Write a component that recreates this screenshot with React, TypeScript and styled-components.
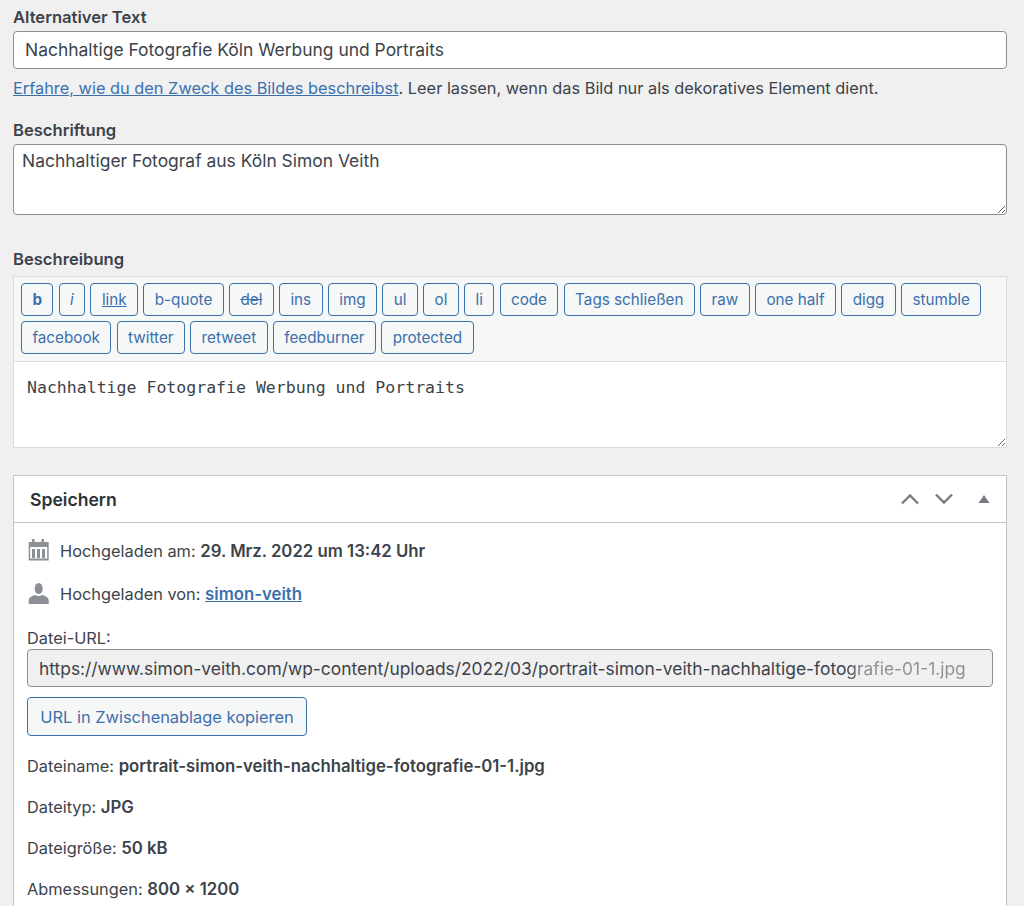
import React from "react";
import styled, { createGlobalStyle } from "styled-components";

const GlobalStyle = createGlobalStyle`
  html, body {
    margin: 0;
    height: 906px;
    overflow: hidden;
    background: #f0f0f1;
  }
  * { box-sizing: border-box; }
`;

const sans = `Inter, "Liberation Sans", sans-serif`;
const blue = "#3b70ad";
const text = "#3c434a";

const Page = styled.div`
  padding: 8px 17px 0 13px;
  font-family: ${sans};
  font-size: 16.35px;
  color: ${text};

  b {
    font-size: 16.75px;
    font-weight: 600;
  }
`;

const Field = styled.div<{ $bottom: number }>`
  display: flex;
  flex-direction: column;
  margin-bottom: ${(p) => p.$bottom}px;
`;

const Label = styled.label`
  font-weight: 600;
  font-size: 16.6px;
  line-height: 18px;
  margin-bottom: 5px;
`;

const TextInput = styled.input`
  height: 38px;
  padding: 0 11px 1px;
  border: 1px solid #8c8f94;
  border-radius: 4px;
  background: #fff;
  font-family: ${sans};
  font-size: 17.45px;
  color: ${text};
  outline: none;
`;

const Hint = styled.p`
  margin: 9px 0 0;
  line-height: 20px;
`;

const TextLink = styled.a`
  color: ${blue};
  text-decoration: underline;
`;

const TextArea = styled.textarea`
  display: block;
  width: 100%;
  height: 71px;
  padding: 6px 8px;
  border: 1px solid #8c8f94;
  border-radius: 4px;
  background: #fff;
  font-family: ${sans};
  font-size: 17.45px;
  line-height: 20px;
  color: ${text};
  resize: vertical;
  outline: none;
`;

const Editor = styled.div`
  margin-top: 3px;
  border: 1px solid #dcdcde;
  background: #fff;
`;

const Toolbar = styled.div`
  display: flex;
  flex-wrap: wrap;
  align-content: flex-start;
  gap: 5px 5.3px;
  height: 85px;
  padding: 6px 7px;
  background: #f6f7f7;
  border-bottom: 1px solid #dcdcde;
`;

const QuickTag = styled.button<{ $bold?: boolean; $italic?: boolean; $under?: boolean; $strike?: boolean }>`
  height: 33px;
  padding: 0 10.4px;
  border: 1px solid ${blue};
  border-radius: 4px;
  background: #f6f7f7;
  color: ${blue};
  font-family: ${sans};
  font-size: 15.25px;
  font-weight: ${(p) => (p.$bold ? 700 : 400)};
  font-style: ${(p) => (p.$italic ? "italic" : "normal")};
  text-decoration: ${(p) => (p.$under ? "underline" : p.$strike ? "line-through" : "none")};
`;

const CodeArea = styled(TextArea)`
  height: 85px;
  padding: 16px 13px;
  border: 0;
  border-radius: 0;
  font-family: "DejaVu Sans Mono", monospace;
  font-size: 16.55px;
`;

const Box = styled.section`
  border: 1px solid #c3c4c7;
  background: #fff;
  height: 500px;
`;

const BoxHeader = styled.header`
  display: flex;
  align-items: center;
  height: 47px;
  padding: 0 16px;
  border-bottom: 1px solid #c3c4c7;
`;

const BoxTitle = styled.h2`
  flex: 1;
  margin: 0;
  font-size: 17.6px;
  font-weight: 600;
  color: #2c3338;
`;

const HeaderIcons = styled.div`
  display: flex;
  align-items: center;
  gap: 14px;
  color: #787c82;
`;

const TriangleSlot = styled.span`
  display: flex;
  margin-left: 10px;
`;

const BoxBody = styled.div`
  padding: 17px 13px 0 13px;
`;

const MetaRow = styled.div<{ $bottom: number }>`
  display: flex;
  align-items: center;
  gap: 11px;
  height: 22px;
  margin-bottom: ${(p) => p.$bottom}px;
`;

const IconSlot = styled.span`
  display: flex;
  flex: none;
  width: 22px;
  color: #8c8f94;
`;

const SmallLabel = styled.div`
  line-height: 18px;
  margin: 0 0 2px;
`;

const UrlField = styled.div`
  display: flex;
  align-items: center;
  height: 38px;
  padding: 0 11px;
  border: 1px solid #8c8f94;
  border-radius: 4px;
  background: #f0f0f1;
  font-size: 17.4px;
  white-space: nowrap;
  overflow: hidden;
`;

const FadedPart = styled.span`
  color: transparent;
  background: linear-gradient(to right, ${text}, #8c8f94 14%);
  -webkit-background-clip: text;
  background-clip: text;
`;

const CopyButton = styled.button`
  display: block;
  height: 39px;
  width: 280px;
  margin: 10px 0 20px;
  border: 1px solid ${blue};
  border-radius: 4px;
  background: #f6f7f7;
  color: ${blue};
  font-family: ${sans};
  font-size: 16.4px;
`;

const Detail = styled.div`
  height: 20px;
  margin-bottom: 21px;
  line-height: 20px;
`;

const tags: [string, object?][] = [
  ["b", { $bold: true }],
  ["i", { $italic: true }],
  ["link", { $under: true }],
  ["b-quote"],
  ["del", { $strike: true }],
  ["ins"],
  ["img"],
  ["ul"],
  ["ol"],
  ["li"],
  ["code"],
  ["Tags schließen"],
  ["raw"],
  ["one half"],
  ["digg"],
  ["stumble"],
  ["facebook"],
  ["twitter"],
  ["retweet"],
  ["feedburner"],
  ["protected"],
];

function CalendarIcon() {
  return (
    <svg width="22" height="24" viewBox="0 0 22 24" fill="currentColor">
      <path d="M5 0h2.500v3h7V0H17v3h4.700v18.500h-20V3H5zM3.200 8v11.500h17V8z" fillRule="evenodd" />
      <path d="M5 10h3v9H5zM10 10h3v9h-3zM15 10h3v9h-3z" />
    </svg>
  );
}

function UserIcon() {
  return (
    <svg width="22" height="22" viewBox="0 0 22 22" fill="currentColor">
      <ellipse cx="11.700" cy="5.500" rx="4" ry="5.500" />
      <path d="M1.700 21v-3.500c0-3 3-4.500 6.500-5.500 1.800 1.300 5.200 1.300 7 0 3.500 1 6.500 2.500 6.500 5.500V21z" />
    </svg>
  );
}

function Chevron({ up }: { up?: boolean }) {
  return (
    <svg width="20" height="12" viewBox="0 0 20 12" fill="none" stroke="currentColor" strokeWidth="2.400">
      <path d={up ? "M2 10.500l8-8 8 8" : "M2 1.500l8 8 8-8"} />
    </svg>
  );
}

function Triangle() {
  return (
    <svg width="12" height="8" viewBox="0 0 12 8" fill="currentColor">
      <path d="M6 0l5.500 8H.5z" />
    </svg>
  );
}

export default function App() {
  return (
    <>
      <GlobalStyle />
      <Page>
        <Field $bottom={23}>
          <Label>Alternativer Text</Label>
          <TextInput readOnly value="Nachhaltige Fotografie Köln Werbung und Portraits" />
          <Hint>
            <TextLink href="#">Erfahre, wie du den Zweck des Bildes beschreibst</TextLink>. Leer lassen, wenn das Bild
            nur als dekoratives Element dient.
          </Hint>
        </Field>
        <Field $bottom={35}>
          <Label>Beschriftung</Label>
          <TextArea readOnly value="Nachhaltiger Fotograf aus Köln Simon Veith" />
        </Field>
        <Field $bottom={27}>
          <Label>Beschreibung</Label>
          <Editor>
            <Toolbar>
              {tags.map(([name, props]) => (
                <QuickTag key={name} {...props}>
                  {name}
                </QuickTag>
              ))}
            </Toolbar>
            <CodeArea readOnly value="Nachhaltige Fotografie Werbung und Portraits" />
          </Editor>
        </Field>
        <Box>
          <BoxHeader>
            <BoxTitle>Speichern</BoxTitle>
            <HeaderIcons>
              <Chevron up />
              <Chevron />
              <TriangleSlot>
                <Triangle />
              </TriangleSlot>
            </HeaderIcons>
          </BoxHeader>
          <BoxBody>
            <MetaRow $bottom={21}>
              <IconSlot>
                <CalendarIcon />
              </IconSlot>
              <span>
                Hochgeladen am: <b>29. Mrz. 2022 um 13:42 Uhr</b>
              </span>
            </MetaRow>
            <MetaRow $bottom={24}>
              <IconSlot>
                <UserIcon />
              </IconSlot>
              <span>
                Hochgeladen von:{" "}
                <TextLink href="#">
                  <b>simon-veith</b>
                </TextLink>
              </span>
            </MetaRow>
            <SmallLabel>Datei-URL:</SmallLabel>
            <UrlField>
              https://www.simon-veith.com/wp-content/uploads/2022/03/portrait-simon-veith-nachhaltige-foto
              <FadedPart>grafie-01-1.jpg</FadedPart>
            </UrlField>
            <CopyButton>URL in Zwischenablage kopieren</CopyButton>
            <Detail>
              Dateiname: <b>portrait-simon-veith-nachhaltige-fotografie-01-1.jpg</b>
            </Detail>
            <Detail>
              Dateityp: <b>JPG</b>
            </Detail>
            <Detail>
              Dateigröße: <b>50 kB</b>
            </Detail>
            <Detail>
              Abmessungen: <b>800 × 1200</b>
            </Detail>
          </BoxBody>
        </Box>
      </Page>
    </>
  );
}
